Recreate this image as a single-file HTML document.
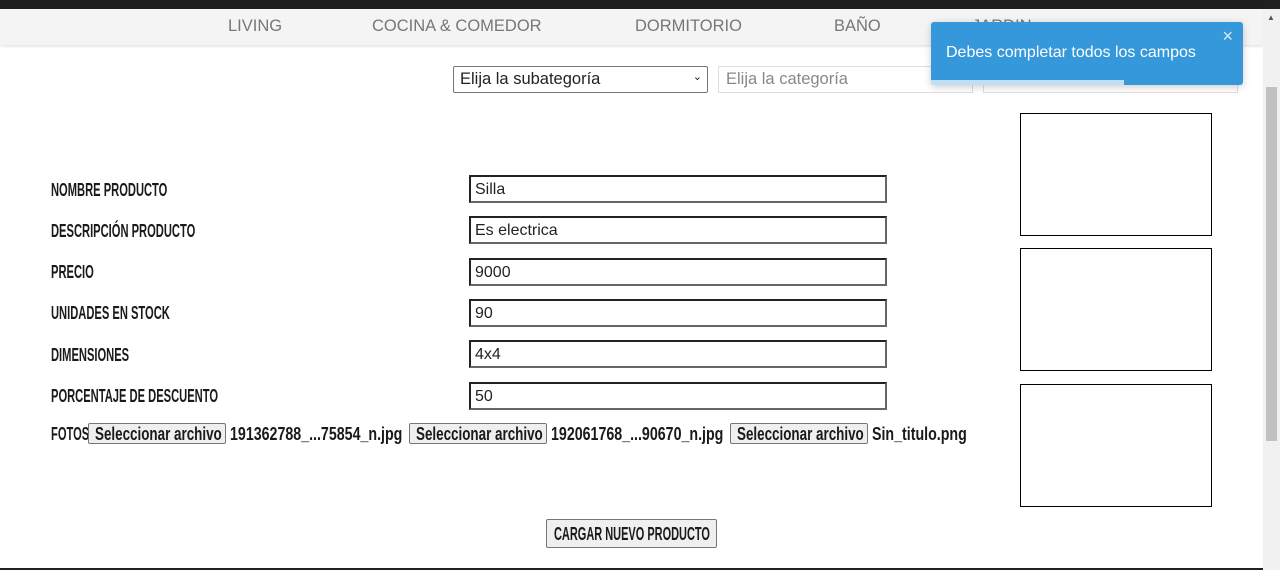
<!DOCTYPE html>
<html><head><meta charset="utf-8"><style>
*{box-sizing:border-box;margin:0;padding:0}
body{width:1280px;height:570px;overflow:hidden;background:#fff;position:relative;font-family:"Liberation Sans",sans-serif}
.a{position:absolute}
.n{position:absolute;white-space:nowrap;font-size:18px;line-height:18px;font-weight:bold;color:#1a1a1a;transform:scaleX(.62);transform-origin:left center}
.f{transform:scaleX(.79)}
.b{transform:scaleX(.745)}
.nav{font-size:16.5px;color:#777;position:absolute;top:17px;white-space:nowrap}
.in{position:absolute;left:469px;width:418px;height:28px;border:2px solid #222;border-bottom-color:#666;border-right-color:#666;font-size:16px;color:#222;padding:4px 4px;line-height:18px}
.box{position:absolute;left:1020px;width:192px;height:123px;border:1px solid #000}
.btn{position:absolute;top:423px;height:21px;border:1px solid #777;border-radius:2px;background:#efefef}
</style></head><body>
<div class="a" style="left:0;top:0;width:1280px;height:9px;background:#1f1f1f"></div>
<div class="a" style="left:0;top:9px;width:1263px;height:36px;background:#f4f4f4;box-shadow:0 1px 3px rgba(0,0,0,.15)"></div>
<div class="nav" style="left:228px">LIVING</div>
<div class="nav" style="left:372px">COCINA &amp; COMEDOR</div>
<div class="nav" style="left:635px">DORMITORIO</div>
<div class="nav" style="left:834px">BAÑO</div>
<div class="nav" style="left:972px">JARDIN</div>
<div class="a" style="left:453px;top:66px;width:255px;height:27px;border:1px solid #767676;border-radius:2px;font-size:16.5px;color:#222;padding:3px 6px">Elija la subategoría<span style="position:absolute;right:5px;top:3px;font-size:11px">&#8964;</span></div>
<div class="a" style="left:718px;top:66px;width:255px;height:27px;border:1px solid #ddd;font-size:16.5px;color:#888;padding:3px 7px">Elija la categoría</div>
<div class="a" style="left:983px;top:66px;width:255px;height:27px;border:1px solid #ddd"></div>
<div class="a" style="left:931px;top:22px;width:312px;height:63px;background:#3498db;border-radius:3px;box-shadow:0 2px 8px rgba(0,0,0,.2);color:#fff;font-size:16px;padding:22px 0 0 15px">Debes completar todos los campos
<span style="position:absolute;right:10px;top:4px;font-size:18px;color:#dbeaf7">×</span>
<div style="position:absolute;left:0;bottom:0;width:193px;height:5px;background:#bfdff5;border-bottom-left-radius:3px"></div></div>
<div class="box" style="top:113px"></div>
<div class="box" style="top:248px"></div>
<div class="box" style="top:384px"></div>
<div class="n" style="left:51px;top:181px">NOMBRE PRODUCTO</div>
<div class="n" style="left:51px;top:222px">DESCRIPCIÓN PRODUCTO</div>
<div class="n" style="left:51px;top:263px">PRECIO</div>
<div class="n" style="left:51px;top:304px">UNIDADES EN STOCK</div>
<div class="n" style="left:51px;top:346px">DIMENSIONES</div>
<div class="n" style="left:51px;top:387px">PORCENTAJE DE DESCUENTO</div>
<div class="in" style="top:175px">Silla</div>
<div class="in" style="top:216px">Es electrica</div>
<div class="in" style="top:258px">9000</div>
<div class="in" style="top:299px">90</div>
<div class="in" style="top:340px">4x4</div>
<div class="in" style="top:382px">50</div>
<div class="n" style="left:51px;top:425px">FOTOS</div>
<div class="btn" style="left:88px;width:138px"></div>
<div class="n b" style="left:95px;top:425px">Seleccionar archivo</div>
<div class="n f" style="left:230px;top:425px">191362788_...75854_n.jpg</div>
<div class="btn" style="left:409px;width:138px"></div>
<div class="n b" style="left:416px;top:425px">Seleccionar archivo</div>
<div class="n f" style="left:551px;top:425px">192061768_...90670_n.jpg</div>
<div class="btn" style="left:730px;width:138px"></div>
<div class="n b" style="left:737px;top:425px">Seleccionar archivo</div>
<div class="n f" style="left:872px;top:425px">Sin_titulo.png</div>
<div class="a" style="left:546px;top:519px;width:171px;height:29px;border:1px solid #777;border-radius:2px;background:#efefef"></div>
<div class="n" style="left:554px;top:525px;transform:scaleX(.61)">CARGAR NUEVO PRODUCTO</div>
<div class="a" style="left:0;top:568px;width:1263px;height:2px;background:#222"></div>
<div class="a" style="left:1263px;top:9px;width:17px;height:561px;background:#f1f1f1"></div>
<div class="a" style="left:1266px;top:87px;width:11px;height:354px;background:#c1c1c1"></div>
<div class="a" style="left:1267px;top:13px;font-size:8px;color:#555">▲</div>
</body></html>
